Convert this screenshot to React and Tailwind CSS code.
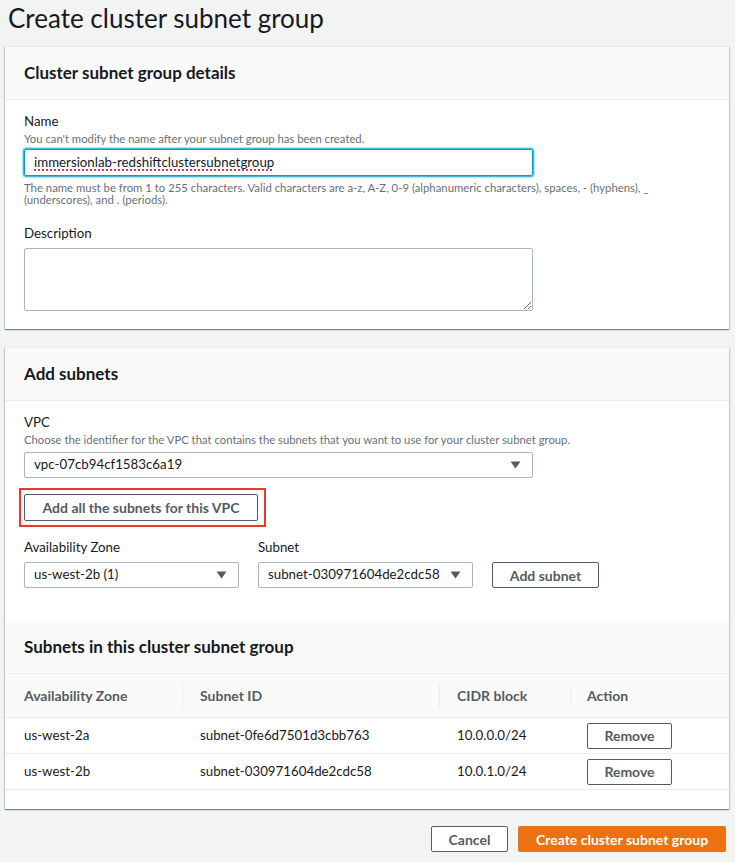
import { useState } from "react";

const FONT = "font-['Lato','Liberation_Sans',sans-serif]";
const CARD =
  "bg-white border-t border-[#eaeded] shadow-[0_1px_1px_0_rgba(0,28,36,0.3),1px_1px_1px_0_rgba(0,28,36,0.15),-1px_1px_1px_0_rgba(0,28,36,0.15)]";

const Arrow = () => (
  <svg width="11" height="8" viewBox="0 0 11 8" className="shrink-0">
    <path d="M0.5 0.5h10L5.5 7.5z" fill="#545b64" />
  </svg>
);

const Select = ({ value, className = "" }) => (
  <div
    className={`flex h-[26px] items-center justify-between rounded-[2px] border border-[#aab7b8] bg-white pl-[9px] pr-[11px] text-[13.3px] text-[#16191f] ${className}`}
  >
    <span className="truncate">{value}</span>
    <Arrow />
  </div>
);

const Button = ({ children, className = "" }) => (
  <button
    className={`flex h-[26px] items-center justify-center rounded-[2px] border border-[#545b64] bg-white text-[14px] font-bold text-[#545b64] ${className}`}
  >
    {children}
  </button>
);

const CardHeader = ({ children }) => (
  <div className="flex h-[53px] items-center border-b border-[#eaeded] bg-[#fafafa] px-[19px]">
    <h2 className="text-[17px] font-bold text-[#16191f]">{children}</h2>
  </div>
);

const rows = [
  { az: "us-west-2a", id: "subnet-0fe6d7501d3cbb763", cidr: "10.0.0.0/24" },
  { az: "us-west-2b", id: "subnet-030971604de2cdc58", cidr: "10.0.1.0/24" },
];

const COLS = "grid grid-cols-[177px_257px_131px_1fr]";

export default function App() {
  const [desc, setDesc] = useState("");

  return (
    <div className={`min-h-screen bg-[#f2f3f3] ${FONT} text-[#16191f]`}>
      {/* TITLE */}
      <h1 className="px-[8px] pt-[1px] text-[26px] font-normal leading-[34px] text-[#16191f]">
        Create cluster subnet group
      </h1>

      <div className="mt-[11px] pl-[5px] pr-[6px]">
        {/* ================= DETAILS ================= */}
        <section className={CARD}>
          <CardHeader>Cluster subnet group details</CardHeader>

          <div className="px-[19px] pb-[18px] pt-[12px]">
            <p className="text-[13.3px] leading-[19px]">Name</p>
            <p className="text-[11.3px] leading-[16px] text-[#687078]">
              You can't modify the name after your subnet group has been created.
            </p>
            <div className="mt-[2px] flex h-[27px] w-[509px] items-center rounded-[2px] border border-[#00a1c9] px-[9px] text-[13.3px] shadow-[0_0_2px_1px_#00a1c9]">
              <span className="underline decoration-[#e0393e] decoration-dotted decoration-2 underline-offset-[3px]">
                immersionlab-redshiftclustersubnetgroup
              </span>
            </div>
            <p className="mt-[6px] text-[11.35px] leading-[12px] text-[#687078]">
              The name must be from 1 to 255 characters. Valid characters are a-z, A-Z, 0-9
              (alphanumeric characters), spaces, - (hyphens), _
              <br />
              (underscores), and . (periods).
            </p>

            <p className="mt-[18px] text-[13.3px] leading-[19px]">Description</p>
            <textarea
              value={desc}
              onChange={(e) => setDesc(e.target.value)}
              className="mt-[5px] block h-[63px] w-[509px] rounded-[2px] border border-[#aab7b8] bg-white px-[9px] py-[4px] text-[13.3px] outline-none"
            />
          </div>
        </section>

        {/* ================= ADD SUBNETS ================= */}
        <section className={`mt-[18px] ${CARD}`}>
          <CardHeader>Add subnets</CardHeader>

          <div className="px-[19px] pb-[33px] pt-[12px]">
            <p className="text-[13.3px] leading-[19px]">VPC</p>
            <p className="text-[11.3px] leading-[16px] text-[#687078]">
              Choose the identifier for the VPC that contains the subnets that you want to use for
              your cluster subnet group.
            </p>
            <Select value="vpc-07cb94cf1583c6a19" className="mt-[4px] w-[509px]" />

            {/* highlighted action */}
            <div className="ml-[-5px] mt-[10px] inline-block border-2 border-[#e8382f] pb-[4px] pl-[3px] pr-[6px] pt-[4px]">
              <Button className="h-[27px] w-[234px]">Add all the subnets for this VPC</Button>
            </div>

            <div className="mt-[11px] flex items-end gap-[19px]">
              <div>
                <p className="text-[13.3px] leading-[19px]">Availability Zone</p>
                <Select value="us-west-2b (1)" className="mt-[5px] w-[215px]" />
              </div>
              <div>
                <p className="text-[13.3px] leading-[19px]">Subnet</p>
                <Select value="subnet-030971604de2cdc58" className="mt-[5px] w-[215px]" />
              </div>
              <Button className="w-[107px]">Add subnet</Button>
            </div>
          </div>

          {/* SUBNETS TABLE */}
          <div className="flex h-[53px] items-center border-b border-[#eaeded] bg-[#fafafa] px-[19px]">
            <h2 className="text-[17px] font-bold">Subnets in this cluster subnet group</h2>
          </div>

          <div className={`${COLS} h-[44px] items-center border-b border-[#eaeded] bg-[#fafafa] text-[14px] font-bold text-[#545b64]`}>
            <div className="pl-[19px]">Availability Zone</div>
            <div className="border-l border-[#eaeded] pl-[17px] leading-[22px]">Subnet ID</div>
            <div className="border-l border-[#eaeded] pl-[17px] leading-[22px]">CIDR block</div>
            <div className="border-l border-[#eaeded] pl-[16px] leading-[22px]">Action</div>
          </div>

          {rows.map((r) => (
            <div
              key={r.id}
              className={`${COLS} h-[36px] items-center border-b border-[#eaeded] text-[13.3px] text-[#16191f]`}
            >
              <div className="pl-[19px]">{r.az}</div>
              <div className="pl-[18px]">{r.id}</div>
              <div className="pl-[18px]">{r.cidr}</div>
              <div className="pl-[17px]">
                <Button className="w-[85px]">Remove</Button>
              </div>
            </div>
          ))}
          <div className="h-[19px]" />
        </section>

        {/* FOOTER */}
        <div className="flex justify-end gap-[10px] pb-[10px] pr-[3px] pt-[17px]">
          <Button className="w-[77px]">Cancel</Button>
          <button className="flex h-[26px] w-[208px] items-center justify-center rounded-[2px] bg-[#ec7211] text-[14px] font-bold text-white">
            Create cluster subnet group
          </button>
        </div>
      </div>
    </div>
  );
}
